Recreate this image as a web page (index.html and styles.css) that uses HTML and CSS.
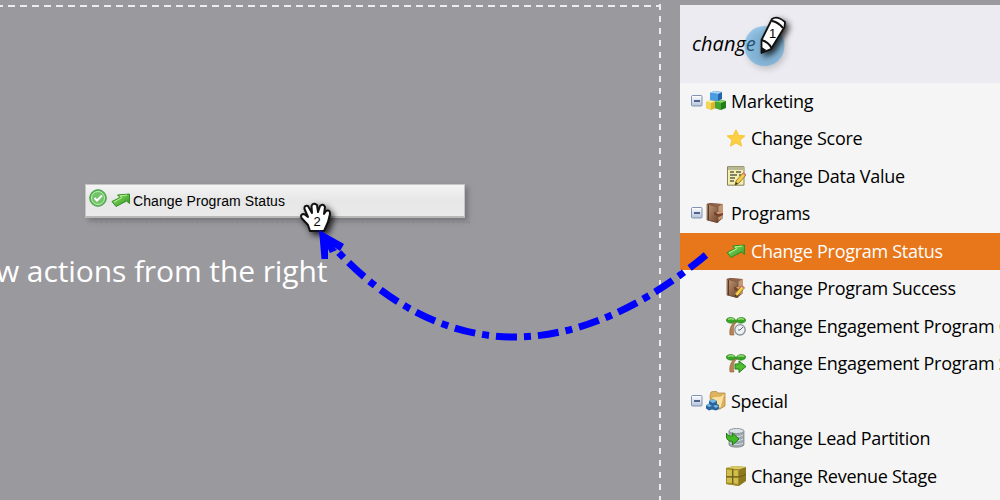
FILE: index.html
```html
<!DOCTYPE html>
<html lang="en"><head><meta charset="utf-8"><title>Change Program Status</title><link rel="stylesheet" href="styles.css"></head>
<body>
<svg width="0" height="0" class="defs">
<defs>
<linearGradient id="gr" x1="0" y1="0" x2="1" y2="1"><stop offset="0" stop-color="#9be86c"/><stop offset="1" stop-color="#27911c"/></linearGradient>
<linearGradient id="br" x1="0" y1="0" x2="1" y2="1"><stop offset="0" stop-color="#c39a77"/><stop offset="1" stop-color="#70452e"/></linearGradient>
<linearGradient id="bl" x1="0" y1="0" x2="0" y2="1"><stop offset="0" stop-color="#fff"/><stop offset="1" stop-color="#b3c3d9"/></linearGradient>
<symbol id="minus" viewBox="0 0 12 12"><rect x=".5" y=".5" width="10.5" height="10.5" rx="1" fill="url(#bl)" stroke="#8093b1"/><path d="M3 6h6" stroke="#20386b" stroke-width="1.5"/></symbol>
<symbol id="cubes" viewBox="0 0 20 20"><path d="M0 11l4-2 6 1v7l-5 2-5-2z" fill="#ddb62d"/><path d="M0 11l4-2 6 1-5 2z" fill="#fff0a0"/><path d="M0 11l5 1v7l-5-2z" fill="#f2d65b"/><path d="M9 11l5-2 6 1v7l-5 2-6-2z" fill="#237d1b"/><path d="M9 11l5-2 6 1-5 2z" fill="#84d45f"/><path d="M9 11l6 1v7l-6-2z" fill="#43a630"/><path d="M4 2l4-2 8 1v7l-4 2-8-1z" fill="#2465a8"/><path d="M4 2l4-2 8 1-4 2z" fill="#a5d8fb"/><path d="M4 2l8 1v7l-8-1z" fill="#4a9de0"/></symbol>
<symbol id="star" viewBox="0 0 20 20"><path d="M10 2l2.500 5.500 6 .5-4.700 4 1.600 6L10 14.800 4.600 18l1.600-6L1.500 8l6-.5z" fill="#fdcf45" stroke="#f8c840" stroke-width="1.300" stroke-linejoin="round"/></symbol>
<symbol id="pencil" viewBox="0 0 12 14"><path d="M1 13l1-4 7-8 3 2-7 8z" fill="#f5ce49" stroke="#80652b" stroke-width=".8"/><path d="M8.500 1.500l1.200-1.200 2.300 2-1.200 1.400z" fill="#d87780"/><path d="M1 13l1-3 2 2z" fill="#333"/></symbol>
<symbol id="note" viewBox="0 0 20 20"><path d="M1.500 .7h16.500v18.500h-16.500z" fill="#f4efae" stroke="#85835a"/><path d="M2 1h15.500v3H2z" fill="#b9b998"/><path d="M4 6h4m2 0h5M4 9h7m2 0h2M4 12h5M4 15h4" stroke="#5c604d" stroke-width="1.500"/><use href="#pencil" x="8" y="6" width="12" height="14"/></symbol>
<symbol id="book" viewBox="0 0 20 20"><path d="M1 1l3-1 13 1v14l-6 5L1 17z" fill="#70432f"/><path d="M9 2l8-1v14l-6 3z" fill="#c29a79"/><path d="M1 1l11 3v15.500L1 17z" fill="url(#br)" stroke="#704a35" stroke-width=".7"/><path d="M1 1l3-.5 12 .7-4 2.800z" fill="#8f6248"/><path d="M2.500 2v15" stroke="#59382a"/><path d="M8 9l9-1v4l-4 2-5-2z" fill="#75452e"/><path d="M10 9l7-1v2l-5 1z" fill="#d69c79"/></symbol>
<symbol id="bookedit" viewBox="0 0 20 20"><use href="#book" width="20" height="20"/><use href="#pencil" x="7" y="7" width="12" height="13"/></symbol>
<symbol id="arrow" viewBox="0 0 20 16"><path d="M1 9.500l8-4-2.500-2.500L18.500 2v9.500L15.500 9 5 14.500z" fill="url(#gr)" stroke="#358b25" stroke-linejoin="round"/><path d="M3 10l8-4.500-2-1.500 7-1" fill="none" stroke="#b4f48e"/></symbol>
<symbol id="plant" viewBox="0 0 20 20"><path d="M11 6C7 9 7 13 8 19H4C3 13 5 9 9 5z" fill="#b98252" stroke="#8d5e3a" stroke-width=".6"/><path d="M10 5C8 8 1 8 0 4c2-4 9-3 10 1zM10 5c1-4 8-5 10-1-1 4-8 4-10 1z" fill="#38a528" stroke="#238218" stroke-width=".6"/><path d="M2 3.500c2-1 4-1 6 0m4 0c2-1 4-1 6 0" fill="none" stroke="#9add70" stroke-width="1.300"/></symbol>
<symbol id="clock" viewBox="0 0 20 20"><use href="#plant" width="20" height="20"/><circle cx="14" cy="13.800" r="5.200" fill="#edf1f3" stroke="#89939b" stroke-width="1.400"/><path d="M14 14l3-3m-3 3h-2" stroke="#536475"/></symbol>
<symbol id="stream" viewBox="0 0 20 20"><use href="#plant" width="20" height="20"/><path d="M9 11h4V8l7 5.500-7 6V16H9z" fill="#50bd31" stroke="#257d17"/></symbol>
<symbol id="folder" viewBox="0 0 20 20"><path d="M4 5l1-4 5-1 2 2 7 0v13l-5 3-9-1z" fill="#dfb45e" stroke="#aa7e38" stroke-width=".7"/><path d="M6 6l9-1 4-3-4 15-9-1z" fill="#ffe09a" stroke="#c79b47" stroke-width=".6"/><path d="M3 10l4-2 4 2v3l2 1v4l-3 1.500-4-1-3 1-3-2v-3l3-2z" fill="#28659d"/><path d="M3 10l4-2 4 2-4 2zM0 14l3-1 3 2-3 1zM7 15l3-1 3 1-3 2z" fill="#77b9e5"/></symbol>
<symbol id="db" viewBox="0 0 20 20"><path d="M3 3v14c2 3 13 3 15 0V3z" fill="#9ca8ad" stroke="#758188" stroke-width=".7"/><ellipse cx="10.500" cy="3" rx="7.500" ry="2.500" fill="#dce2e5" stroke="#8c989e"/><path d="M4 7c3 2 10 2 13 0M4 11c3 2 10 2 13 0M4 15c3 2 10 2 13 0" fill="none" stroke="#dae1e4"/><path d="M.5 5c1 3 3 3 6 3V5l6.500 6-6.500 6v-3.500C4 13 1 13 .5 9z" fill="#42b928" stroke="#217c16"/></symbol>
<symbol id="box" viewBox="0 0 20 20"><path d="M0 2l8-2 12 1v14l-7 5-13-2z" fill="#8c781e"/><path d="M0 2l8-2 12 1-7 2.500z" fill="#d8ca65"/><path d="M0 2l13 1.500V20L0 18z" fill="#a08c2a"/><path d="M1 3.500l5 .5V10H1zM7.500 4.200h4.500V10H7.500zM1 11.500h5V17l-5-.5zM7.500 11.500h4.500V18l-4.500-.7z" fill="#cfbd4e"/><path d="M6.700 3v15M0 10.800l13 .2 7-2.500" stroke="#685917" fill="none"/></symbol>
</defs></svg>
<div class="app">
<main class="canvas"><div class="zone">
<svg class="dashes" width="662" height="500"><path d="M-4 6H661" /><path d="M660 4V500" class="vertical"/></svg>
<div class="step"><svg class="check" viewBox="0 0 18 18"><circle cx="9" cy="9" r="8.300" fill="#5db856" stroke="#45a144"/><circle cx="9" cy="9" r="6.500" fill="#73c468" stroke="#c5ebbd"/><path d="M5.500 9l2.500 2.500 5-5" fill="none" stroke="#fff" stroke-width="2"/></svg><svg class="steparrow"><use href="#arrow"/></svg><span class="steptext">Change Program Status</span></div>
<div class="ghost"></div>
<p class="hint">w actions from the right</p>
</div></main>
<aside class="panel">
<header class="search"><span class="query">change</span></header>
<ul class="tree">
<li class="row"><svg class="minus"><use href="#minus"/></svg><svg class="icon"><use href="#cubes"/></svg><span>Marketing</span></li>
<li class="row child"><svg class="icon"><use href="#star"/></svg><span>Change Score</span></li>
<li class="row child"><svg class="icon"><use href="#note"/></svg><span>Change Data Value</span></li>
<li class="row"><svg class="minus"><use href="#minus"/></svg><svg class="icon"><use href="#book"/></svg><span>Programs</span></li>
<li class="row child selected"><svg class="icon"><use href="#arrow"/></svg><span>Change Program Status</span></li>
<li class="row child"><svg class="icon"><use href="#bookedit"/></svg><span>Change Program Success</span></li>
<li class="row child"><svg class="icon"><use href="#clock"/></svg><span>Change Engagement Program Cadence</span></li>
<li class="row child"><svg class="icon"><use href="#stream"/></svg><span>Change Engagement Program Stream</span></li>
<li class="row"><svg class="minus"><use href="#minus"/></svg><svg class="icon"><use href="#folder"/></svg><span>Special</span></li>
<li class="row child"><svg class="icon"><use href="#db"/></svg><span>Change Lead Partition</span></li>
<li class="row child"><svg class="icon"><use href="#box"/></svg><span>Change Revenue Stage</span></li>
</ul></aside>
<svg class="overlay" viewBox="0 0 1000 500">
<circle class="shade" cx="764.500" cy="46" r="20" fill="#44a4df" fill-opacity=".5"/>
<g class="shade dark"><path d="M772 19Q777 15 785 22L784.500 27 771 49 761.500 53 761.500 40z" fill="#fff" stroke="#111" stroke-width="1.800" stroke-linejoin="round"/><path d="M772 21q6 1 11 7M761.500 40q7 2 10 8" fill="none" stroke="#111" stroke-width="2"/><path d="M761.500 47l5 3-5 3z" fill="#111"/></g>
<text class="num" x="769" y="38">1</text>
<g class="shade dark"><path d="M310 231L308 225 301.500 218Q300 214 304 214L308 217 304.500 209Q304 205 308 206L312 213 311.500 206Q313 202 317 205L318 212 320 206Q323 203 325 207L324 214 326 211Q330 209 330 214L328 222 324 231z" fill="#fff" stroke="#111" stroke-width="2" stroke-linejoin="round"/></g>
<text class="num" x="313.500" y="226">2</text>
<path class="curve" d="M706 255C652 300 585 337 514 337C447 337 383 303 330 243"/>
<path d="M319 230L344 244 340 251 334 247 337 250 330 253 328 249 328 259H321.500z" fill="#00f"/>
</svg>
</div></body></html>
```

FILE: styles.css
```css
*{box-sizing:border-box}
body{margin:0;width:1000px;height:500px;overflow:hidden;background:#9a999e}
.defs{position:absolute}
.app{position:relative;display:flex;height:500px;overflow:hidden;font-family:"Open Sans","Noto Sans",sans-serif}
.canvas{width:680px;flex:none}
.zone{position:relative;width:662px;height:500px;padding:184px 0 0 85px}
.dashes{position:absolute;left:0;top:0;fill:none;stroke:#ecebef;stroke-width:2;stroke-dasharray:7 5}
.dashes .vertical{stroke-width:2;stroke-dasharray:6 6}
.step{display:flex;width:380px;height:34px;padding:4px 0 0 3px;background:linear-gradient(#f3f3f3,#e7e7e7 50%,#eaeaea);border:1px solid #c5c5c5;border-bottom:2px solid #b8b8b8;box-shadow:3px 3px 5px #77767b}
.check{width:18px;height:18px;flex:none;margin-right:4px}
.steparrow{width:20px;height:18px;margin-top:2px;flex:none}
.steptext{font:14px/25px "Liberation Sans",Arial,sans-serif;letter-spacing:.09px;color:#000;margin-left:2px;white-space:nowrap}
.ghost{height:5px;width:375px;margin-left:10px;border-bottom:1px dashed #88878c}
.hint{margin:25px 0 0 -89px;font-size:30px;line-height:46px;letter-spacing:-.1px;color:#fff;white-space:nowrap}
.panel{width:320px;height:495px;margin-top:5px;background:#f5f5f5;overflow:hidden}
.search{height:77.500px;background:#ecebf2;padding:24px 0 0 12px}
.query{font-size:20px;line-height:30px;font-style:italic}
.tree{list-style:none;margin:0;padding:0}
.row{display:flex;align-items:center;height:37.500px;padding:0 0 1px 11px;font-size:18px;line-height:24px;letter-spacing:-.28px;white-space:nowrap;color:#000}
.minus{width:12px;height:12px;margin-right:3px;flex:none}
.icon{width:20px;height:20px;margin-right:5px;flex:none}
.child{padding-left:46px}
.selected{background:#e8761b;color:#fff}
.overlay{position:absolute;left:0;top:0;width:1000px;height:500px}
.shade{filter:drop-shadow(2px 3px 3px rgba(0,0,0,.35))}
.dark{filter:drop-shadow(3px 3px 3px rgba(0,0,0,.8))}
.num{font:13px "Liberation Sans",Arial,sans-serif;fill:#000}
.curve{fill:none;stroke:#00f;stroke-width:7;stroke-dasharray:21 7 7 7}
```
